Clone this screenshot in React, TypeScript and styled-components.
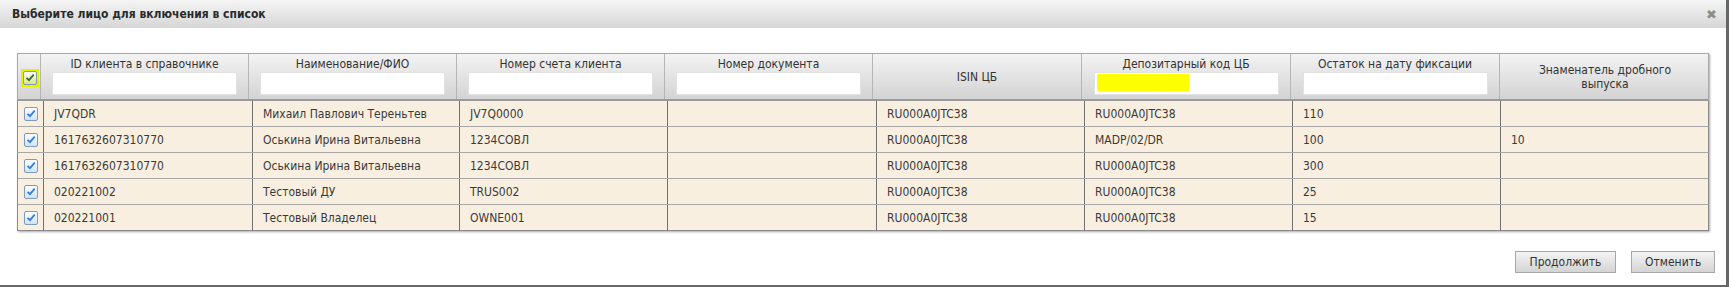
import React from 'react'
import styled, { createGlobalStyle } from 'styled-components'

const headerWidths = [23, 208, 208, 208, 208, 209, 209, 209, 210]
const bodyWidths = [26, 209, 207, 208, 209, 208, 208, 208, 209]

type Column = { title: string; filter: boolean }

const columns: Column[] = [
  { title: 'ID клиента в справочнике', filter: true },
  { title: 'Наименование/ФИО', filter: true },
  { title: 'Номер счета клиента', filter: true },
  { title: 'Номер документа', filter: true },
  { title: 'ISIN ЦБ', filter: false },
  { title: 'Депозитарный код ЦБ', filter: true },
  { title: 'Остаток на дату фиксации', filter: true },
  { title: 'Знаменатель дробного выпуска', filter: false },
]

const rows = [
  ['JV7QDR', 'Михаил Павлович Тереньтев', 'JV7Q0000', '', 'RU000A0JTC38', 'RU000A0JTC38', '110', ''],
  ['1617632607310770', 'Оськина Ирина Витальевна', '1234СОВЛ', '', 'RU000A0JTC38', 'MADP/02/DR', '100', '10'],
  ['1617632607310770', 'Оськина Ирина Витальевна', '1234СОВЛ', '', 'RU000A0JTC38', 'RU000A0JTC38', '300', ''],
  ['020221002', 'Тестовый ДУ', 'TRUS002', '', 'RU000A0JTC38', 'RU000A0JTC38', '25', ''],
  ['020221001', 'Тестовый Владелец', 'OWNE001', '', 'RU000A0JTC38', 'RU000A0JTC38', '15', ''],
]

const tpl = (w: number[]) => w.map((x) => `${x}px`).join(' ')

const App = () => {
  return (
    <>
      <GlobalStyle />
      <Dialog>
        <TitleBar>
          <Title>Выберите лицо для включения в список</Title>
          <Close>✖</Close>
        </TitleBar>
        <Content>
          <Grid>
            <HeadRow $cols={tpl(headerWidths)}>
              <HeadCell $center>
                <Marker>
                  <Check $color="#3f6b1c" $bg="#d9e58a" />
                </Marker>
              </HeadCell>
              {columns.map((c, i) => (
                <HeadCell key={i} $center={!c.filter}>
                  <HeadTitle>{c.title}</HeadTitle>
                  {c.filter && (
                    <Filter>{i === 5 && <Highlight />}</Filter>
                  )}
                </HeadCell>
              ))}
            </HeadRow>
            {rows.map((r, ri) => (
              <BodyRow key={ri} $cols={tpl(bodyWidths)}>
                <BodyCell $box>
                  <Check $color="#2f7fe0" $bg="#cfe2f7" />
                </BodyCell>
                {r.map((v, ci) => (
                  <BodyCell key={ci}>{v}</BodyCell>
                ))}
              </BodyRow>
            ))}
          </Grid>
        </Content>
        <Footer>
          <Button>Продолжить</Button>
          <Button>Отменить</Button>
        </Footer>
      </Dialog>
    </>
  )
}

export default App

const Check = ({ $color, $bg }: { $color: string; $bg: string }) => (
  <CheckBox $bg={$bg}>
    <svg width="10" height="9" viewBox="0 0 10 9">
      <path d="M1.5 4.8 L4 7.2 L8.7 1.6" stroke={$color} strokeWidth="1.8" fill="none" />
    </svg>
  </CheckBox>
)

const GlobalStyle = createGlobalStyle`
  html, body {
    margin: 0;
    height: 287px;
    overflow: hidden;
  }
  body {
    background: #676767;
    font-family: "DejaVu Sans Condensed", "DejaVu Sans", sans-serif;
    font-size: 12px;
    color: #333;
  }
`

const Dialog = styled.div`
  width: 1726px;
  height: 285px;
  background: #fff;
  display: flex;
  flex-direction: column;
`

const TitleBar = styled.div`
  height: 28px;
  box-sizing: border-box;
  display: flex;
  align-items: center;
  justify-content: space-between;
  padding: 0 9px 0 12px;
  background: linear-gradient(#f5f5f5, #d6d6d6);
`

const Title = styled.div`
  font-weight: bold;
  font-size: 12px;
  color: #2a2a2a;
`

const Close = styled.div`
  font-size: 13px;
  font-family: "DejaVu Sans", sans-serif;
  color: #8c8c8c;
`

const Content = styled.div`
  padding: 25px 0 0 17px;
`

const Grid = styled.div`
  width: 1692px;
  box-shadow: 1px 1px 2px rgba(0, 0, 0, 0.35);
`

const HeadRow = styled.div<{ $cols: string }>`
  display: grid;
  grid-template-columns: ${(p) => p.$cols};
  height: 48px;
  box-sizing: border-box;
  border: 1px solid #a9a9a9;
  border-bottom: 2px solid #9a9a9a;
  background: linear-gradient(#f3f3f3, #d3d3d3);
`

const HeadCell = styled.div<{ $center?: boolean }>`
  border-right: 1px solid #b5b5b5;
  display: flex;
  flex-direction: column;
  align-items: center;
  justify-content: ${(p) => (p.$center ? 'center' : 'flex-start')};
  padding-top: ${(p) => (p.$center ? '0' : '3px')};
  &:last-child {
    border-right: none;
  }
`

const HeadTitle = styled.div`
  text-align: center;
  line-height: 14px;
  color: #333;
  padding: 0 20px;
`

const Filter = styled.div`
  position: relative;
  width: 185px;
  height: 23px;
  margin-top: 1px;
  box-sizing: border-box;
  background: #fff;
  border: 1px solid #e2e2e2;
`

const Highlight = styled.div`
  position: absolute;
  left: 2px;
  top: 1px;
  width: 92px;
  height: 17px;
  background: #ffff00;
`

const Marker = styled.div`
  width: 18px;
  height: 18px;
  background: #e8f000;
  display: flex;
  align-items: center;
  justify-content: center;
  margin-left: 1px;
  margin-top: 2px;
`

const CheckBox = styled.div<{ $bg: string }>`
  width: 14px;
  height: 14px;
  box-sizing: border-box;
  border: 1px solid #7f9db9;
  border-radius: 2px;
  background: linear-gradient(#ffffff, ${(p) => p.$bg});
  display: flex;
  align-items: center;
  justify-content: center;
`

const BodyRow = styled.div<{ $cols: string }>`
  display: grid;
  grid-template-columns: ${(p) => p.$cols};
  height: 26px;
  box-sizing: border-box;
  background: #f9efe0;
  border-left: 1px solid #8a8a8a;
  border-right: 1px solid #8a8a8a;
  border-bottom: 1px solid #a8a8a8;
  &:last-child {
    border-bottom: 1px solid #8a8a8a;
  }
`

const BodyCell = styled.div<{ $box?: boolean }>`
  border-right: 1px solid #707070;
  display: flex;
  align-items: center;
  justify-content: ${(p) => (p.$box ? 'center' : 'flex-start')};
  padding-left: ${(p) => (p.$box ? '0' : '10px')};
  color: #3a3a3a;
  white-space: nowrap;
  &:last-child {
    border-right: none;
  }
`

const Footer = styled.div`
  display: flex;
  justify-content: flex-end;
  gap: 15px;
  padding: 20px 11px 0 0;
`

const Button = styled.button`
  height: 22px;
  padding: 0 13px;
  font-family: inherit;
  font-size: 12px;
  color: #333;
  border: 1px solid #a8a8a8;
  border-radius: 0;
  background: linear-gradient(#f4f4f4, #d4d4d4);
  &:first-child {
    width: 101px;
  }
  &:last-child {
    width: 84px;
  }
`
